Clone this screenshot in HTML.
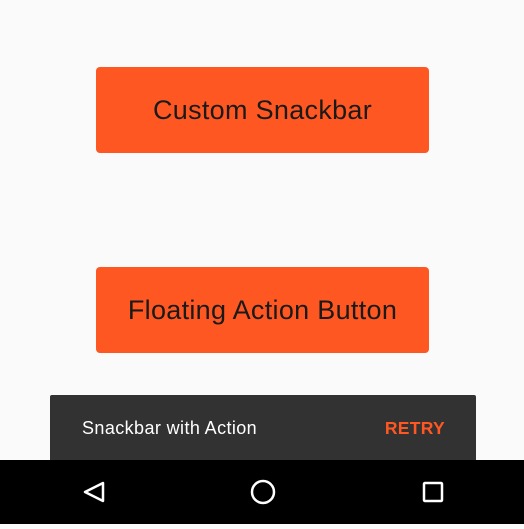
<!DOCTYPE html>
<html><head><style>
body{margin:0;width:524px;height:524px;background:#fafafa;position:relative;overflow:hidden;font-family:"Liberation Sans",sans-serif}
.btn{position:absolute;left:96px;width:333px;height:86px;background:#ff5722;border-radius:4px;color:#1a1a1a;font-size:27px;display:flex;align-items:center;justify-content:center;letter-spacing:0.3px}
.snack{position:absolute;left:50px;top:395px;width:426px;height:65px;background:#323232;border-radius:2px 2px 0 0}
.snack .t{position:absolute;left:32px;top:23px;color:#fff;font-size:18px;letter-spacing:0.4px}
.snack .a{position:absolute;right:31px;top:23px;color:#ff5722;font-size:17.5px;font-weight:bold;letter-spacing:0.3px}
.nav{position:absolute;left:0;top:460px;width:524px;height:64px;background:#000}
</style></head><body>
<div class="btn" style="top:67px">Custom Snackbar</div>
<div class="btn" style="top:267px">Floating Action Button</div>
<div class="snack"><span class="t">Snackbar with Action</span><span class="a">RETRY</span></div>
<div class="nav"><svg width="524" height="64">
<path d="M103 23 L85 32 L103 41 Z" fill="none" stroke="#fff" stroke-width="2.5" stroke-linejoin="round"/>
<circle cx="263" cy="32" r="11" fill="none" stroke="#fff" stroke-width="2.5"/>
<rect x="424" y="23" width="18" height="18" fill="none" stroke="#fff" stroke-width="2.5" rx="1"/>
</svg></div>
</body></html>
